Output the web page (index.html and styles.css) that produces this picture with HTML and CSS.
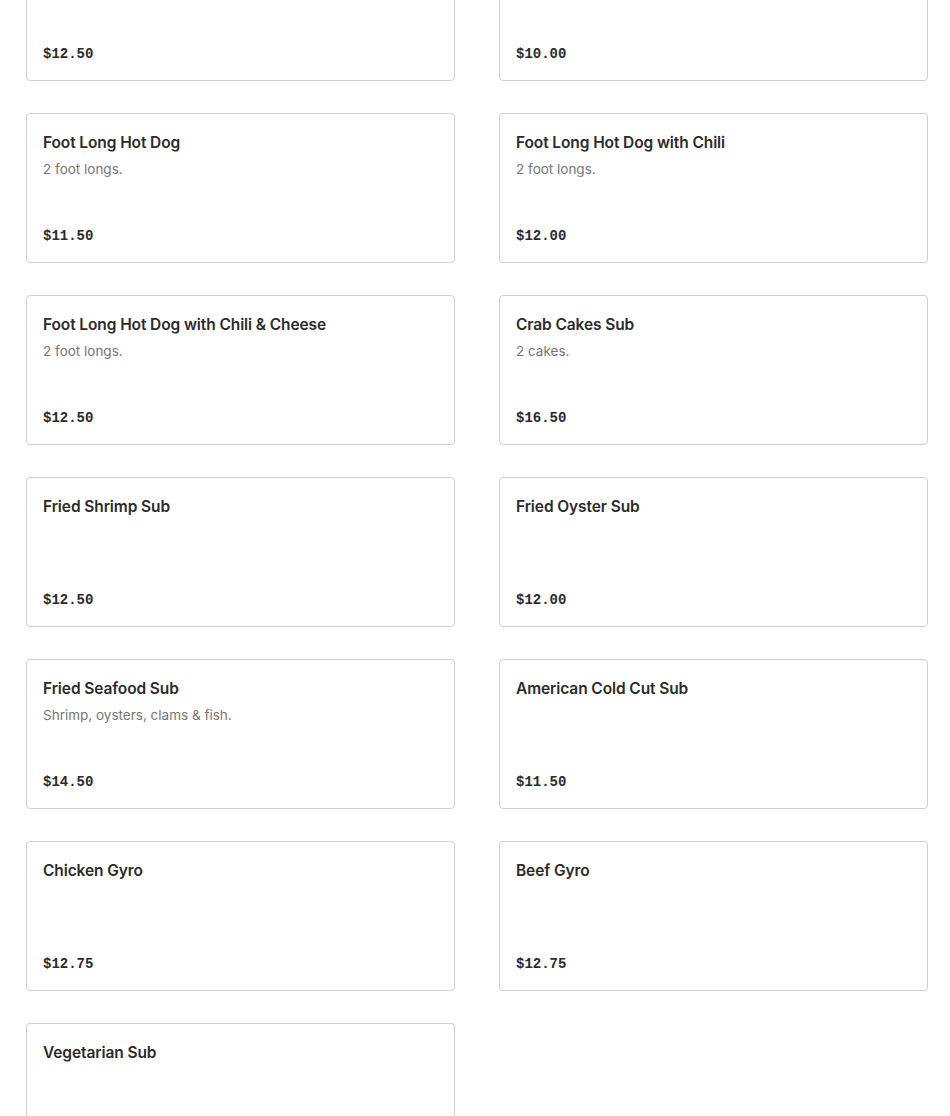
FILE: index.html
```html
<!DOCTYPE html>
<html>
<head>
<meta charset="utf-8">
<link rel="stylesheet" href="styles.css">
</head>
<body>
<div class="menu">
  <div class="card"><div class="price">$12.50</div></div>
  <div class="card"><div class="price">$10.00</div></div>
  <div class="card"><div class="title">Foot Long Hot Dog</div><div class="desc">2 foot longs.</div><div class="price">$11.50</div></div>
  <div class="card"><div class="title">Foot Long Hot Dog with Chili</div><div class="desc">2 foot longs.</div><div class="price">$12.00</div></div>
  <div class="card"><div class="title">Foot Long Hot Dog with Chili &amp; Cheese</div><div class="desc">2 foot longs.</div><div class="price">$12.50</div></div>
  <div class="card"><div class="title">Crab Cakes Sub</div><div class="desc">2 cakes.</div><div class="price">$16.50</div></div>
  <div class="card"><div class="title">Fried Shrimp Sub</div><div class="price">$12.50</div></div>
  <div class="card"><div class="title">Fried Oyster Sub</div><div class="price">$12.00</div></div>
  <div class="card"><div class="title">Fried Seafood Sub</div><div class="desc">Shrimp, oysters, clams &amp; fish.</div><div class="price">$14.50</div></div>
  <div class="card"><div class="title">American Cold Cut Sub</div><div class="price">$11.50</div></div>
  <div class="card"><div class="title">Chicken Gyro</div><div class="price">$12.75</div></div>
  <div class="card"><div class="title">Beef Gyro</div><div class="price">$12.75</div></div>
  <div class="card card-last"><div class="title">Vegetarian Sub</div></div>
</div>
</body>
</html>
```

FILE: styles.css
```css
html, body {
  margin: 0;
  padding: 0;
  background: #ffffff;
  overflow: hidden;
}
body {
  height: 1116px;
  font-family: Inter, "Noto Sans", sans-serif;
}
.menu {
  display: grid;
  grid-template-columns: 429px 429px;
  column-gap: 44px;
  row-gap: 32px;
  padding-left: 26px;
  margin-top: -69px;
}
.card {
  box-sizing: border-box;
  height: 150px;
  border: 1px solid #cfcfcf;
  border-radius: 4px;
  padding: 17px 16px 16px;
  display: flex;
  flex-direction: column;
  background: #fff;
}
.card-last {
  height: 94px;
  border-bottom: none;
  border-radius: 4px 4px 0 0;
}
.title {
  font-size: 15.5px;
  line-height: 24px;
  font-weight: 600;
  color: #2b2b2b;
  letter-spacing: -0.1px;
}
.desc {
  margin-top: 4px;
  font-size: 13.5px;
  line-height: 20px;
  color: #767676;
}
.price {
  margin-top: auto;
  font-family: "Liberation Mono", "DejaVu Sans Mono", monospace;
  font-weight: 700;
  font-size: 14px;
  line-height: 20px;
  color: #2b2b2b;
}
```
